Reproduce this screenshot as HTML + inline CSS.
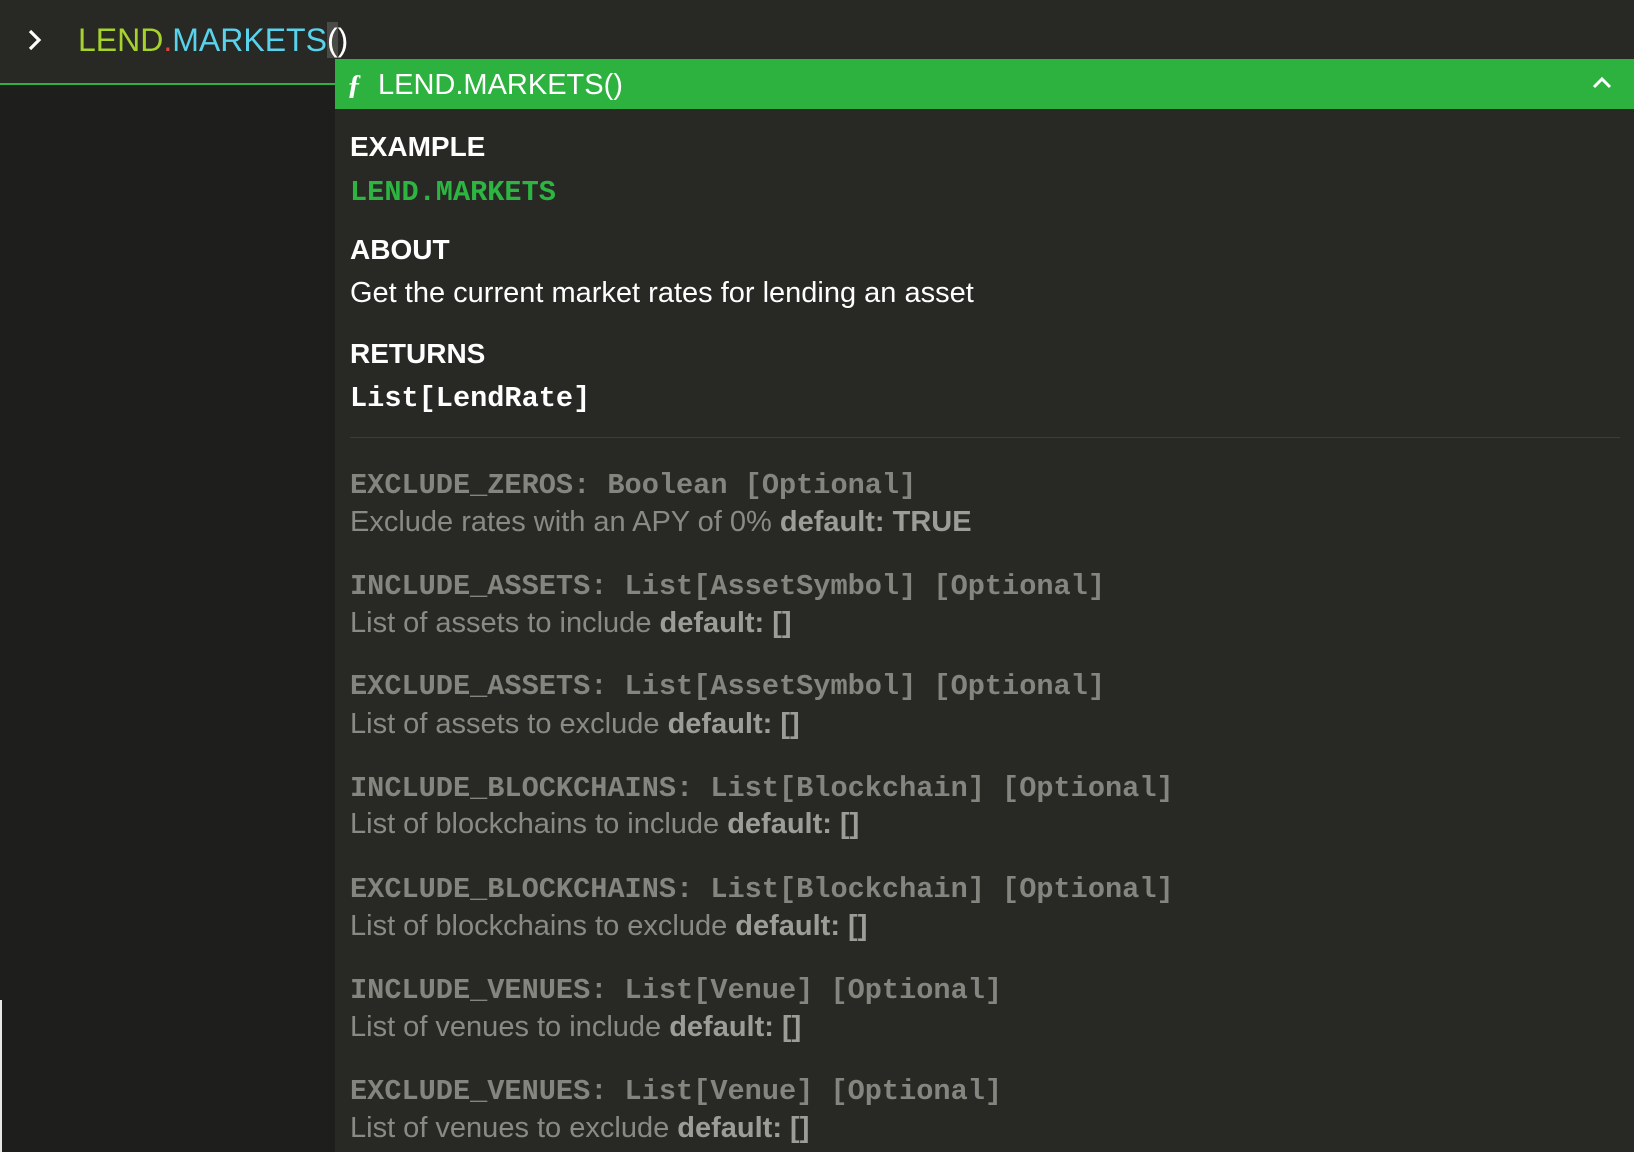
<!DOCTYPE html>
<html><head><style>
*{margin:0;padding:0;box-sizing:border-box}
body{width:1634px;height:1152px;background:#1e1e1c;position:relative;overflow:hidden;font-family:"Liberation Sans",sans-serif}
.top{position:absolute;left:0;top:0;width:1634px;height:84px;background:#282824}
.gl{position:absolute;left:0;top:83px;width:336px;height:2px;background:#2db240}
.wl{position:absolute;left:0;top:1000px;width:2px;height:152px;background:#e8e8e8}
.cmd{position:absolute;left:78px;top:20px;font-size:32px;line-height:40px;white-space:nowrap}
.panel{position:absolute;left:335px;top:59px;width:1299px;height:1093px;background:#282825}
.hdr{position:absolute;left:0;top:0;width:1299px;height:50px;background:#2db240;color:#fff;font-size:29px;line-height:52px}
.t{position:absolute;left:15px;white-space:nowrap}
.h{color:#fff;font-weight:bold;font-size:28px}
.m{font-family:"Liberation Mono",monospace;font-size:28.6px;font-weight:bold}
.p{color:#85857f}
.d{color:#8a8a85;font-size:29px}
.d b{color:#9d9d98}
</style></head><body>
<div class="top"></div>
<div class="gl"></div>
<div class="wl"></div>
<svg style="position:absolute;left:26px;top:28px" width="18" height="24"><path d="M4 3 L13 12 L4 21" stroke="#fff" stroke-width="3.2" fill="none"/></svg>
<div class="cmd"><span style="color:#a6d22e">LEND</span><span style="color:#e0443c">.</span><span style="color:#59d2ec">MARKETS</span><span style="color:#fff;background:#4a4a46">(</span><span style="color:#fff">)</span></div>
<div class="panel">
<div class="hdr"><span style="position:absolute;left:12px;font-style:italic;font-weight:bold;font-family:'Liberation Serif',serif">ƒ</span><span style="position:absolute;left:43px">LEND.MARKETS()</span>
<svg style="position:absolute;left:1257px;top:17px" width="20" height="14"><path d="M2 11 L10 3 L18 11" stroke="#fff" stroke-width="3" fill="none"/></svg></div>
<div class="t h" style="top:72px">EXAMPLE</div>
<div class="t m" style="top:117px;color:#2cb540">LEND.MARKETS</div>
<div class="t h" style="top:175px">ABOUT</div>
<div class="t" style="top:218px;color:#fff;font-size:29px">Get the current market rates for lending an asset</div>
<div class="t h" style="top:279px">RETURNS</div>
<div class="t m" style="top:323px;color:#fff">List[LendRate]</div>
<div style="position:absolute;left:15px;top:378px;width:1270px;height:1px;background:#3c3c38"></div>
<div class="t m p" style="top:410px">EXCLUDE_ZEROS: Boolean [Optional]</div>
<div class="t d" style="top:447px">Exclude rates with an APY of 0% <b>default: TRUE</b></div>
<div class="t m p" style="top:511px">INCLUDE_ASSETS: List[AssetSymbol] [Optional]</div>
<div class="t d" style="top:548px">List of assets to include <b>default: []</b></div>
<div class="t m p" style="top:611px">EXCLUDE_ASSETS: List[AssetSymbol] [Optional]</div>
<div class="t d" style="top:649px">List of assets to exclude <b>default: []</b></div>
<div class="t m p" style="top:713px">INCLUDE_BLOCKCHAINS: List[Blockchain] [Optional]</div>
<div class="t d" style="top:749px">List of blockchains to include <b>default: []</b></div>
<div class="t m p" style="top:814px">EXCLUDE_BLOCKCHAINS: List[Blockchain] [Optional]</div>
<div class="t d" style="top:851px">List of blockchains to exclude <b>default: []</b></div>
<div class="t m p" style="top:915px">INCLUDE_VENUES: List[Venue] [Optional]</div>
<div class="t d" style="top:952px">List of venues to include <b>default: []</b></div>
<div class="t m p" style="top:1016px">EXCLUDE_VENUES: List[Venue] [Optional]</div>
<div class="t d" style="top:1053px">List of venues to exclude <b>default: []</b></div>
</div>
</body></html>
